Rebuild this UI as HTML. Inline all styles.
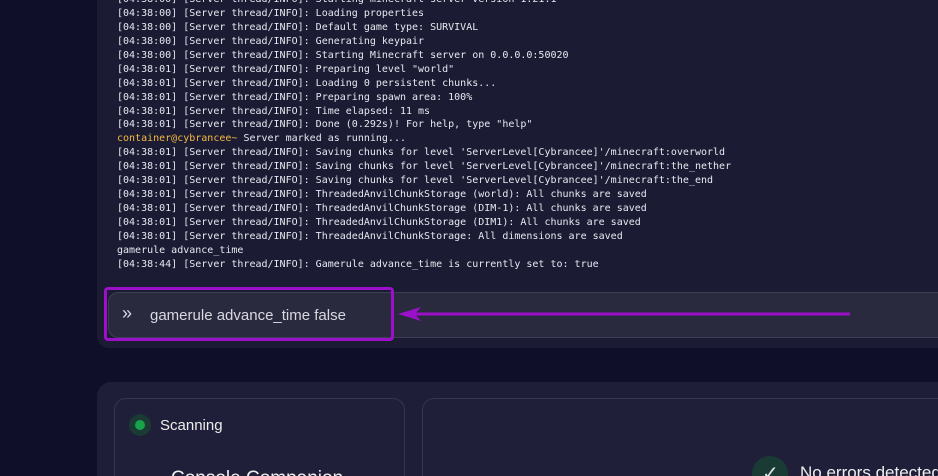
<!DOCTYPE html>
<html><head><meta charset="utf-8"><style>
*{margin:0;padding:0;box-sizing:border-box}
html,body{width:938px;height:476px;overflow:hidden}
body{background:#0f0f29;font-family:"Liberation Sans",sans-serif;position:relative}
.con{position:absolute;left:97px;top:0;width:841px;height:348px;background:#1b1b34;border-radius:0 0 0 12px}
.log{position:absolute;left:117px;top:-7px;font-family:"DejaVu Sans Mono",monospace;font-size:10px;line-height:13.94px;color:#e8e8f0;white-space:pre;width:821px;height:283px;overflow:hidden}
.y{color:#f5b942}
.inp{position:absolute;left:108px;top:292px;width:830px;height:46px;background:#2a2a3e;border:1px solid #3e3e55;border-right:none;border-radius:10px 0 0 10px}
.hl{position:absolute;left:104px;top:287px;width:290px;height:54px;border:3px solid #9b10c8;border-radius:4px}
.cmd{position:absolute;left:150px;top:307px;font-size:15px;color:#d8d8e2}
.chev{position:absolute;left:122px;top:303px;font-size:18px;color:#d8d8e2}
.bot{position:absolute;left:97px;top:382px;width:841px;height:94px;background:#1e1e38;border-radius:14px 0 0 0;overflow:hidden}
.c1{position:absolute;left:17px;top:16px;width:291px;height:100px;border:1px solid #36364e;border-radius:12px;background:#1f1f39}
.c2{position:absolute;left:325px;top:16px;width:540px;height:100px;border:1px solid #36364e;border-radius:12px;background:#1f1f39}
</style></head><body>
<div class="con"></div>
<div class="log" style="top:0;padding-top:0"><div style="margin-top:-7px">[04:38:00] [Server thread/INFO]: Starting minecraft server version 1.21.1
[04:38:00] [Server thread/INFO]: Loading properties
[04:38:00] [Server thread/INFO]: Default game type: SURVIVAL
[04:38:00] [Server thread/INFO]: Generating keypair
[04:38:00] [Server thread/INFO]: Starting Minecraft server on 0.0.0.0:50020
[04:38:01] [Server thread/INFO]: Preparing level "world"
[04:38:01] [Server thread/INFO]: Loading 0 persistent chunks...
[04:38:01] [Server thread/INFO]: Preparing spawn area: 100%
[04:38:01] [Server thread/INFO]: Time elapsed: 11 ms
[04:38:01] [Server thread/INFO]: Done (0.292s)! For help, type "help"
<span class="y">container@cybrancee~</span> Server marked as running...
[04:38:01] [Server thread/INFO]: Saving chunks for level 'ServerLevel[Cybrancee]'/minecraft:overworld
[04:38:01] [Server thread/INFO]: Saving chunks for level 'ServerLevel[Cybrancee]'/minecraft:the_nether
[04:38:01] [Server thread/INFO]: Saving chunks for level 'ServerLevel[Cybrancee]'/minecraft:the_end
[04:38:01] [Server thread/INFO]: ThreadedAnvilChunkStorage (world): All chunks are saved
[04:38:01] [Server thread/INFO]: ThreadedAnvilChunkStorage (DIM-1): All chunks are saved
[04:38:01] [Server thread/INFO]: ThreadedAnvilChunkStorage (DIM1): All chunks are saved
[04:38:01] [Server thread/INFO]: ThreadedAnvilChunkStorage: All dimensions are saved
gamerule advance_time
[04:38:44] [Server thread/INFO]: Gamerule advance_time is currently set to: true</div></div>
<div class="inp"></div>
<div class="chev">»</div>
<div class="cmd">gamerule advance_time false</div>
<div class="hl"></div>
<svg style="position:absolute;left:395px;top:304px" width="460" height="20"><line x1="20" y1="10" x2="455" y2="10" stroke="#9b10c8" stroke-width="3"/><path d="M3 10 L26 3 L20 10 L26 17 Z" fill="#9b10c8"/></svg>
<div class="bot">
<div class="c1"></div>
<div class="c2"></div>
<div style="position:absolute;left:32px;top:32px;width:22px;height:22px;border-radius:50%;background:#1b3a34"></div>
<div style="position:absolute;left:38px;top:38px;width:10px;height:10px;border-radius:50%;background:#16a34a"></div>
<div style="position:absolute;left:63px;top:35px;font-size:15px;color:#eee">Scanning</div>
<div style="position:absolute;left:74px;top:86px;font-size:19px;color:#eee;white-space:nowrap">Console Companion</div>
<div style="position:absolute;left:655px;top:74px;width:36px;height:36px;border-radius:50%;background:#1a3a34"></div>
<div style="position:absolute;left:665px;top:79px;font-size:20px;color:#e6e6e6">✓</div>
<div style="position:absolute;left:703px;top:81px;font-size:17px;color:#eee;white-space:nowrap">No errors detected</div>
</div>
</body></html>
